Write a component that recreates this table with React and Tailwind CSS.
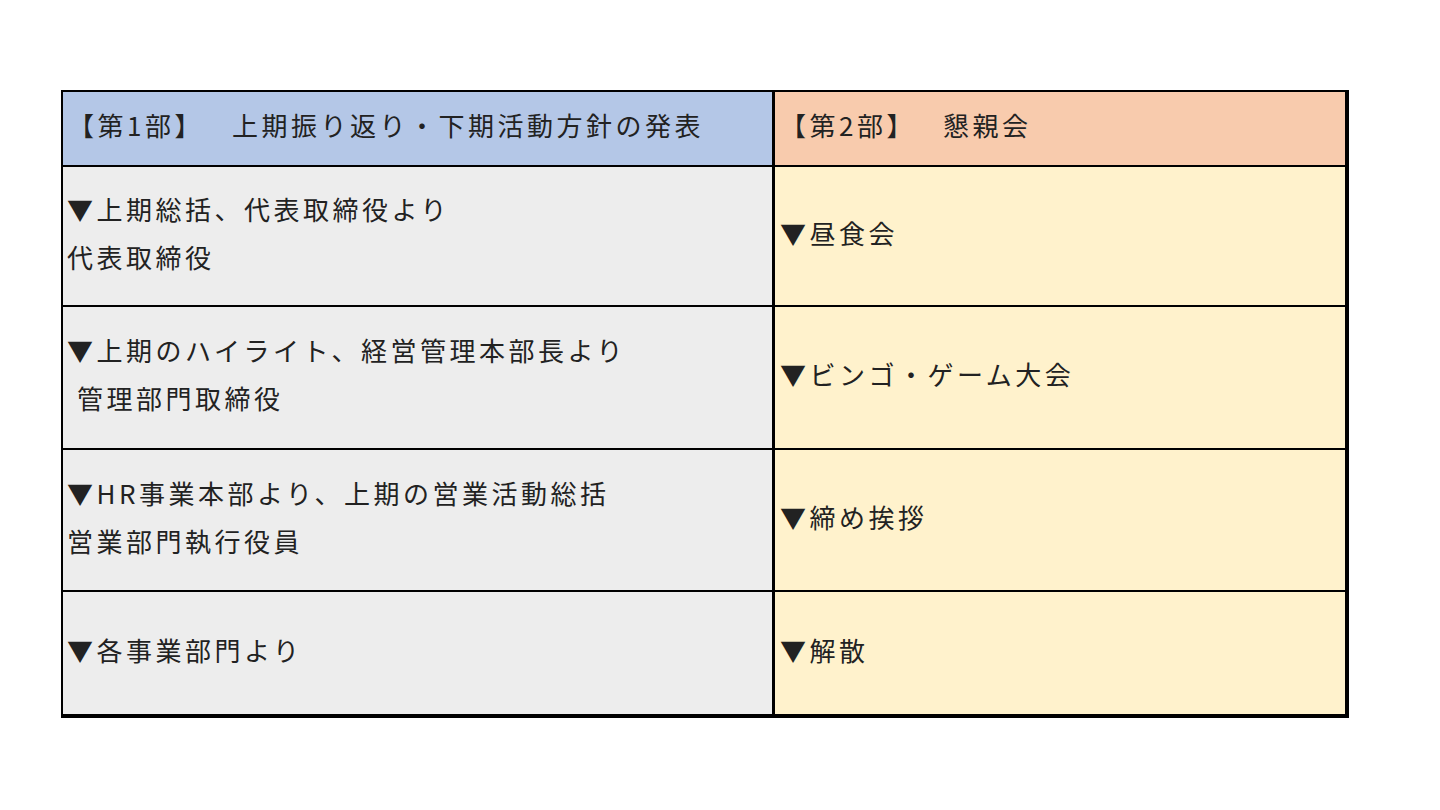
const rows = [
  { left: ["▼上期総括、代表取締役より", "代表取締役"], right: "▼昼食会", h: "h-[138px]" },
  { left: ["▼上期のハイライト、経営管理本部長より", "管理部門取締役"], right: "▼ビンゴ・ゲーム大会", h: "h-[143px]", indent: true },
  { left: ["▼HR事業本部より、上期の営業活動総括", "営業部門執行役員"], right: "▼締め挨拶", h: "h-[142px]" },
  { left: ["▼各事業部門より"], right: "▼解散", h: "h-[124px]" },
];

export default function App() {
  return (
    <div
      className="w-[1440px] h-[810px] bg-white pt-[90px] pl-[61px] text-[#222] text-[26px] tracking-[3.5px] leading-[48px]"
      style={{ fontFamily: '"Noto Sans CJK JP", "Noto Sans", sans-serif' }}
    >
      <div className="w-[1288px] border-t-2 border-l-2 border-r-4 border-b-4 border-black">
        {/* header */}
        <div className="flex h-[75px] border-b-2 border-black">
          <div className="w-[712px] bg-[#b4c7e7] border-r-[3px] border-black flex items-center pl-[5px] pb-[7px]">
            <span>【第1部】</span>
            <span className="ml-[28px]">上期振り返り・下期活動方針の発表</span>
          </div>
          <div className="flex-1 bg-[#f8cbad] flex items-center pl-[5px] pb-[7px]">
            <span>【第2部】</span>
            <span className="ml-[27px]">懇親会</span>
          </div>
        </div>

        {rows.map((r, i) => (
          <div key={i} className={`flex ${r.h} ${i > 0 ? "border-t-2 border-black" : ""}`}>
            <div className="w-[712px] bg-[#ededed] border-r-[3px] border-black flex flex-col justify-center pl-[4px] pb-[7px]">
              <div>{r.left[0]}</div>
              {r.left[1] && <div className={r.indent ? "pl-[10px]" : ""}>{r.left[1]}</div>}
            </div>
            <div className="flex-1 bg-[#fff2cc] flex items-center pl-[5px] pb-[7px]">
              {r.right}
            </div>
          </div>
        ))}
      </div>
    </div>
  );
}
